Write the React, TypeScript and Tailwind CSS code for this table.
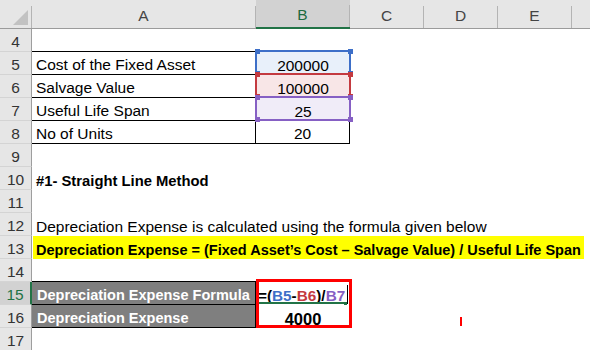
import React from 'react'

const cols = [
  { id: 'A', w: 'w-[224px]' },
  { id: 'B', w: 'w-[94px]', active: true },
  { id: 'C', w: 'w-[74px]' },
  { id: 'D', w: 'w-[74px]' },
  { id: 'E', w: 'w-[74px]' },
]

function ColHeader() {
  return (
    <div className="flex h-[29px] bg-[#e6e6e6] text-[#444]">
      {/* corner */}
      <div className="w-[32px] shrink-0 flex border-b border-[#9b9b9b]">
        <div className="flex-1 flex items-start justify-end pt-[10px] pr-[2px]">
          <svg width="16" height="16" viewBox="0 0 16 16">
            <polygon points="15,0 15,15 0,15" fill="#c2c2c2" />
          </svg>
        </div>
        <div className="w-px h-[22px] self-end bg-[#b4b4b4]" />
      </div>
      {cols.map((c) => (
        <div
          key={c.id}
          className={`${c.w} shrink-0 flex ${
            c.active ? 'bg-[#d2d2d2] text-[#1e6b41] border-b-2 border-[#217346]' : 'border-b border-[#9b9b9b]'
          }`}
        >
          <div className="flex-1 flex items-end justify-center pb-[3px]">{c.id}</div>
          <div className="w-px h-[22px] self-end bg-[#b4b4b4]" />
        </div>
      ))}
      <div className="flex-1 border-b border-[#9b9b9b]" />
    </div>
  )
}

function Row({ n, active, children }: { n: number; active?: boolean; children?: React.ReactNode }) {
  return (
    <div className="flex h-[23px]">
      <div
        className={`w-[32px] shrink-0 flex items-end justify-center border-b border-b-[#d4d4d4] ${
          active
            ? 'bg-[#d2d2d2] text-[#217346] border-r-2 border-r-[#217346]'
            : 'bg-[#e6e6e6] text-[#333] border-r border-r-[#9e9e9e]'
        }`}
      >
        {n}
      </div>
      <div className="flex flex-1 min-w-0">{children}</div>
    </div>
  )
}

// range highlight shown while editing the formula
function RangeCell({ value, fill, border, handle }: { value: string; fill: string; border: string; handle: string }) {
  return (
    <div className={`relative w-[94px] shrink-0 flex items-end justify-center ${fill}`}>
      {value}
      <div className={`absolute -left-[1px] -top-[2px] w-[96px] h-[25px] border-2 ${border}`} />
      <div className={`absolute -left-[1px] -top-[3px] w-[5px] h-[5px] ${handle}`} />
      <div className={`absolute -right-[3px] -top-[3px] w-[5px] h-[5px] ${handle}`} />
      <div className={`absolute -left-[1px] -bottom-[1px] w-[5px] h-[5px] ${handle}`} />
      <div className={`absolute -right-[3px] -bottom-[1px] w-[5px] h-[5px] ${handle}`} />
    </div>
  )
}

const labelCell = 'w-[224px] shrink-0 flex items-end pl-[4px] border-b border-r border-black whitespace-nowrap'

export default function App() {
  return (
    <div className="w-[590px] h-[350px] overflow-hidden bg-white font-['Liberation_Sans',Arial,sans-serif] text-[15.5px] leading-[18px] text-black">
      <ColHeader />

      <Row n={4}>
        <div className="w-[224px] shrink-0 border-b border-black" />
      </Row>
      <Row n={5}>
        <div className={labelCell}>Cost of the Fixed Asset</div>
        <RangeCell value="200000" fill="bg-[#e8f0fa]" border="border-[#3d6fc8]" handle="bg-[#3d6fc8]" />
      </Row>
      <Row n={6}>
        <div className={labelCell}>Salvage Value</div>
        <RangeCell value="100000" fill="bg-[#f8e6e7]" border="border-[#c43a40]" handle="bg-[#c43a40]" />
      </Row>
      <Row n={7}>
        <div className={labelCell}>Useful Life Span</div>
        <RangeCell value="25" fill="bg-[#f0ecf8]" border="border-[#8660c4]" handle="bg-[#8660c4]" />
      </Row>
      <Row n={8}>
        <div className={labelCell}>No of Units</div>
        <div className="w-[94px] shrink-0 flex items-end justify-center border-b border-r border-black">20</div>
      </Row>
      <Row n={9} />
      <Row n={10}>
        <div className="flex-1 flex items-end pl-[4px] font-bold text-[14.8px] whitespace-nowrap">#1- Straight Line Method</div>
      </Row>
      <Row n={11} />
      <Row n={12}>
        <div className="flex-1 flex items-end pl-[4px] whitespace-nowrap">
          Depreciation Expense is calculated using the formula given below
        </div>
      </Row>
      <Row n={13}>
        <div className="flex-1 flex">
          <div className="ml-[1px] pl-[3px] pr-[3px] flex items-end bg-[#ffff00] font-bold text-[14.5px] whitespace-nowrap">
            Depreciation Expense = (Fixed Asset’s Cost – Salvage Value) / Useful Life Span
          </div>
        </div>
      </Row>
      <Row n={14}>
        <div className="w-[224px] shrink-0 border-b border-black" />
      </Row>
      <Row n={15} active>
        <div className={`${labelCell} bg-[#7f7f7f] text-white font-bold text-[14.5px] pl-[5px]`}>
          Depreciation Expense Formula
        </div>
        <div className="relative w-[94px] shrink-0 flex items-end pl-[2px] font-bold text-[15.3px] whitespace-nowrap">
          <span>=(</span>
          <span className="text-[#3d6fc8]">B5</span>
          <span>-</span>
          <span className="text-[#c43a40]">B6</span>
          <span>)/</span>
          <span className="text-[#8660c4]">B7</span>
          <span className="inline-block w-px h-[19px] bg-black ml-[2px] mb-[1px]" />
          <div className="absolute left-[3px] right-[6px] bottom-[1px] h-[2px] bg-[#217346]" />
          <div className="absolute right-[3px] bottom-0 w-[3px] h-[3px] bg-[#217346]" />
          <div className="absolute z-10 left-0 -top-[3px] w-[96px] h-[49px] border-[3px] border-[#ff0000]" />
        </div>
      </Row>
      <Row n={16}>
        <div className={`${labelCell} bg-[#7f7f7f] text-white font-bold text-[14.5px] pl-[5px]`}>
          Depreciation Expense
        </div>
        <div className="w-[94px] shrink-0 flex items-end justify-center font-bold text-[16.5px]">4000</div>
        <div className="flex-1 flex items-start pl-[110px] pt-[12px]">
          <div className="w-[2px] h-[9px] bg-[#ff0000]" />
        </div>
      </Row>
      <Row n={17} />
    </div>
  )
}
